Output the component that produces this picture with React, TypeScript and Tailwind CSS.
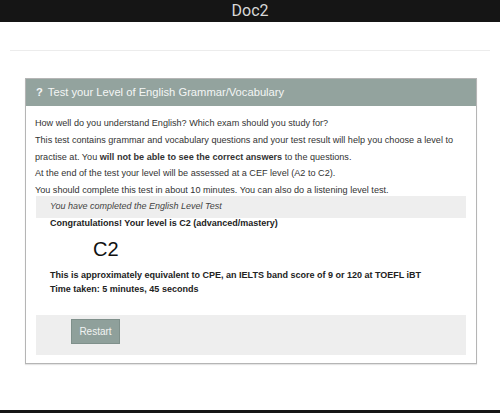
export default function App() {
  return (
    <div className="w-[500px] h-[413px] bg-white flex flex-col font-['Liberation_Sans',Arial,sans-serif] overflow-hidden">
      <div className="h-[22px] bg-[#151515] flex items-center justify-center shrink-0">
        <span className="text-[16px] text-[#d8d8d8] font-['Roboto',sans-serif] leading-none">Doc2</span>
      </div>

      <div className="mt-[28px] mx-[10px] h-px bg-[#ececec]" />

      <div className="mt-[27px] ml-[25px] mr-[23px] border border-[#b5b5b5] shadow-[0_1px_1px_rgba(0,0,0,0.1)]">
        <div className="h-[27px] bg-[#93a39e] flex items-center pl-[10px] text-[11.2px] text-[#f4f6f5]">
          <span className="font-bold mr-[5px]">?</span>
          <span>Test your Level of English Grammar/Vocabulary</span>
        </div>

        <div className="pt-[9px] pb-[8px] pl-[9px] pr-[10px]">
          <div className="text-[9.1px] leading-[16.75px] text-[#333]">
            <p>How well do you understand English? Which exam should you study for?</p>
            <p>
              This test contains grammar and vocabulary questions and your test result will help you choose a level to
              practise at. You <b>will not be able to see the correct answers</b> to the questions.
            </p>
            <p>At the end of the test your level will be assessed at a CEF level (A2 to C2).</p>
            <p>You should complete this test in about 10 minutes. You can also do a listening level test.</p>
          </div>

          <div className="mt-[-3px] ml-px h-[22px] bg-[#eeeeee] flex items-center pl-[14px] text-[9px] italic text-[#444]">
            You have completed the English Level Test
          </div>

          <div className="pl-[15px] text-[9px] text-[#222]">
            <p className="font-bold leading-[14px] mt-[-2px]">Congratulations! Your level is C2 (advanced/mastery)</p>
            <p className="text-[20px] leading-[24px] mt-[7px] pl-[43px] text-[#111]">C2</p>
            <p className="font-bold leading-[14px] mt-[7px]">
              This is approximately equivalent to CPE, an IELTS band score of 9 or 120 at TOEFL iBT
            </p>
            <p className="font-bold leading-[14px]">Time taken: 5 minutes, 45 seconds</p>
          </div>

          <div className="mt-[19px] ml-px h-[40px] bg-[#eeeeee] pt-[3px] pl-[35px]">
            <button className="w-[49px] h-[25px] bg-[#8fa09b] border border-[#7f908b] text-[10px] text-[#f2f4f3]">
              Restart
            </button>
          </div>
        </div>
      </div>

      <div className="flex-1" />
      <div className="h-[3px] bg-[#151515] shrink-0" />
    </div>
  );
}
